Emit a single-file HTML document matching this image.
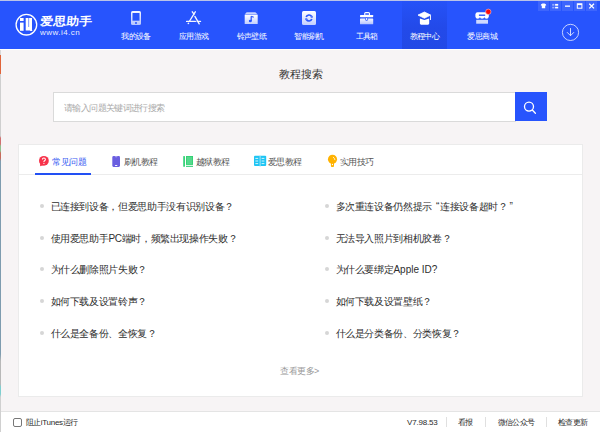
<!DOCTYPE html>
<html><head><meta charset="utf-8">
<style>
*{margin:0;padding:0;box-sizing:border-box}
html,body{width:600px;height:432px;overflow:hidden;background:#f7f4f5;font-family:"Liberation Sans",sans-serif;position:relative}
.abs{position:absolute}
#hdr{left:0;top:0;width:600px;height:48px;background:#2754fd;border-top:1px solid #bac3e8;border-bottom:1px solid #fff;height:50px}
.nav{position:absolute;top:0;height:47px;width:46px;color:#fff;font-size:8px;letter-spacing:-0.6px;font-weight:500;text-align:center}
.nav .lbl{position:absolute;left:-10px;right:-10px;top:32px;line-height:9px;white-space:nowrap}
.nav svg{position:absolute;left:8px;top:9px}
#sel{left:402px;top:1px;width:45px;height:48px;background:linear-gradient(#2552f8,#234ae9 55%,#2249e6)}
.wb{position:absolute;top:1px;width:11px;height:10px;background:rgba(255,255,255,0.10)}
#title{left:0;width:600px;padding-left:2px;top:66px;text-align:center;font-size:11px;letter-spacing:0.2px;color:#333;line-height:16px}
#search{left:53px;top:92px;width:463px;height:30px;background:#fff;border:1px solid #dadada;border-right:none}
#ph{left:64px;top:101.5px;font-size:9px;letter-spacing:-0.62px;color:#a9a9a9;line-height:12px;white-space:nowrap}
#sbtn{left:515px;top:92px;width:32px;height:29px;background:#2754fd}
#card{left:18px;top:144px;width:565px;height:253px;background:#fff;border:1px solid #ebebeb}
#tabsep{left:19px;top:174px;width:563px;height:1px;background:#ececec}
#uline{left:35px;top:173px;width:56px;height:2px;background:#2250f4}
.tab{position:absolute;top:156px;font-size:9px;letter-spacing:-0.5px;color:#555;line-height:12px;white-space:nowrap}
.item{position:absolute;font-size:10px;letter-spacing:-0.35px;color:#2e2e2e;line-height:12px;white-space:nowrap}
.dot{position:absolute;width:4px;height:4px;border-radius:50%;background:#d6d6d6}
#more{left:280px;top:364.5px;font-size:9px;letter-spacing:-0.5px;color:#999;line-height:12px}
#foot{left:0;top:411px;width:600px;height:21px;background:#fff;border-top:1px solid #e4e4e4}
.ft{position:absolute;top:417px;font-size:8px;letter-spacing:-0.6px;color:#2a2a2a;font-weight:500;line-height:12px;white-space:nowrap}
.fsep{position:absolute;top:417px;width:1px;height:10px;background:#e0e0e0}
</style></head><body>
<div id="hdr" class="abs"></div>
<div id="sel" class="abs"></div>
<svg class="abs" style="left:0;top:0" width="600" height="48" viewBox="0 0 600 48">
 <defs>
  <linearGradient id="gw" x1="0" y1="0" x2="0" y2="1">
   <stop offset="0" stop-color="#fff" stop-opacity="1"/><stop offset="1" stop-color="#fff" stop-opacity="0.72"/>
  </linearGradient>
  <linearGradient id="gb" x1="0" y1="0" x2="0" y2="1">
   <stop offset="0" stop-color="#fff" stop-opacity="0.95"/><stop offset="1" stop-color="#fff" stop-opacity="0.65"/>
  </linearGradient>
 </defs>
 <!-- logo -->
 <circle cx="26.4" cy="24.7" r="10.3" fill="none" stroke="#fff" stroke-width="1.3"/>
 <rect x="20" y="18" width="3.6" height="3" fill="#fff"/>
 <rect x="20" y="22.6" width="3.6" height="8.2" fill="#fff"/>
 <path d="M25.7 18h2.8v9h0.6v-9h2.9v12.2l0.6 0.9h-2.3l-0.4-0.7h-4.2z" fill="#fff"/>
 <!-- phone -->
 <rect x="131" y="11" width="10" height="14" rx="1.6" fill="url(#gb)"/>
 <rect x="132.5" y="13" width="7" height="7.7" fill="#2754fd"/>
 <circle cx="136" cy="23" r="1" fill="#2754fd"/>
 <!-- app store -->
 <g stroke="#fff" stroke-width="1.35" stroke-linecap="round" fill="none" opacity="0.95">
  <path d="M192.3 11.8L194 14.2"/>
  <path d="M195.3 11.8L189.6 21"/>
  <path d="M194.9 16.4L199.2 23.8"/>
  <path d="M186.6 21.4H195.4"/>
  <path d="M197.2 21.4H200.5"/>
  <path d="M188.2 23.6L188.6 23.2"/>
 </g>
 <!-- ringtone -->
 <path d="M246.6 12.2H255.4L257.7 14.5H244.7Z" fill="#fff" fill-opacity="0.75"/>
 <rect x="244.7" y="14.8" width="13" height="9.2" fill="url(#gw)"/>
 <path d="M251.2 16.3v4.6" stroke="#2754fd" stroke-width="1.2"/>
 <path d="M251.2 16.3l2.5 1" stroke="#2754fd" stroke-width="1.1"/>
 <ellipse cx="250.3" cy="21" rx="1.5" ry="1.3" fill="#2754fd"/>
 <!-- flash -->
 <rect x="302" y="11" width="14" height="14" rx="1.5" fill="url(#gw)"/>
 <path d="M306.18 16.97A3 3 0 0 1 311.60 16.50" stroke="#2754fd" stroke-width="1.7" fill="none"/>
 <path d="M311.82 19.03A3 3 0 0 1 306.40 19.50" stroke="#2754fd" stroke-width="1.7" fill="none"/>
 <path d="M312.81 15.80L312.45 17.97L310.39 17.20Z" fill="#2754fd"/>
 <path d="M305.19 20.20L305.55 18.03L307.61 18.80Z" fill="#2754fd"/>
 <!-- toolbox -->
 <rect x="364.7" y="12.6" width="4.8" height="2.8" rx="1" fill="none" stroke="#fff" stroke-width="1.1"/>
 <rect x="360" y="15" width="13.2" height="2.2" rx="0.6" fill="#fff"/>
 <rect x="360" y="18.5" width="13.2" height="5.8" rx="0.6" fill="url(#gb)"/>
 <rect x="365.6" y="17.6" width="2" height="2.8" rx="0.5" fill="#fff" stroke="#2754fd" stroke-width="0.8"/>
 <!-- grad cap -->
 <path d="M418 15.1L424.4 12L430.7 15.1L424.4 18.2Z" fill="#fff" stroke="#fff" stroke-width="0.8" stroke-linejoin="round"/>
 <path d="M419.9 18.4L424.4 19.9L429.2 18.4V23.6Q429.2 24.7 428 24.7H421.1Q419.9 24.7 419.9 23.6Z" fill="#fff"/>
 <path d="M430.5 15.3V20" stroke="#fff" stroke-width="0.9"/>
 <!-- shop -->
 <rect x="475.5" y="12.2" width="13.2" height="5" rx="2" fill="#fff"/>
 <circle cx="477.7" cy="16.5" r="2.2" fill="#fff"/><circle cx="482.1" cy="16.5" r="2.2" fill="#fff"/><circle cx="486.5" cy="16.5" r="2.2" fill="#fff"/>
 <rect x="478.9" y="14.5" width="6.3" height="1.4" fill="#2754fd"/>
 <rect x="476.2" y="19.8" width="11.8" height="3.9" fill="#fff" fill-opacity="0.78"/>
 <circle cx="488.3" cy="11.8" r="2.7" fill="#ff0a0a" stroke="#ffc8c8" stroke-width="0.6"/>
 <!-- window buttons -->
 <rect x="538" y="1" width="11" height="10" fill="#fff" fill-opacity="0.1"/>
 <rect x="550" y="1" width="11" height="10" fill="#fff" fill-opacity="0.1"/>
 <rect x="562" y="1" width="11" height="10" fill="#fff" fill-opacity="0.1"/>
 <rect x="574" y="1" width="11" height="10" fill="#fff" fill-opacity="0.1"/>
 <rect x="586" y="1" width="11" height="10" fill="#fff" fill-opacity="0.1"/>
 <path d="M541.2 4.2L542.5 3.6H544.5L545.8 4.2L546.3 5.3L545.2 5.8V8.2H541.8V5.8L540.7 5.3Z" fill="#fff"/>
 <rect x="552.2" y="3.9" width="2.2" height="1.8" fill="#fff" fill-opacity="0.45"/>
 <rect x="552.2" y="6.8" width="2.2" height="1.6" fill="#fff" fill-opacity="0.45"/>
 <rect x="555.1" y="3.9" width="3.1" height="1.8" fill="#fff"/>
 <rect x="555.1" y="6.8" width="3.1" height="1.6" fill="#fff"/>
 <rect x="565" y="5.5" width="5" height="1.3" fill="#fff"/>
 <rect x="577.3" y="3.8" width="4.6" height="4.4" fill="none" stroke="#fff" stroke-width="1"/>
 <rect x="577.3" y="3.8" width="4.6" height="1.3" fill="#fff"/>
 <path d="M589.3 3.8L594 8.4M594 3.8L589.3 8.4" stroke="#fff" stroke-width="1.3"/>
 <!-- download -->
 <circle cx="570.5" cy="32.4" r="8.1" fill="none" stroke="#fff" stroke-opacity="0.72" stroke-width="1"/>
 <path d="M570.5 28.1V35.6M567 32.2L570.5 35.7L574 32.2" fill="none" stroke="#fff" stroke-opacity="0.78" stroke-width="1"/>
</svg>
<div class="abs" style="left:39.5px;top:13.5px;color:#fff;font-size:11px;font-weight:bold;letter-spacing:0.2px;line-height:14px;white-space:nowrap;transform:scale(1.16,1.02) skewX(-5deg);transform-origin:0 50%">爱思助手</div>
<div class="abs" style="left:40px;top:27px;color:rgba(255,255,255,0.92);font-size:8px;letter-spacing:0.45px;line-height:12px;white-space:nowrap">www.i4.cn</div>
<div class="nav" style="left:113px"><div class="lbl">我的设备</div></div>
<div class="nav" style="left:170.7px"><div class="lbl">应用游戏</div></div>
<div class="nav" style="left:228.4px"><div class="lbl">铃声壁纸</div></div>
<div class="nav" style="left:286.1px"><div class="lbl">智能刷机</div></div>
<div class="nav" style="left:343.8px"><div class="lbl">工具箱</div></div>
<div class="nav" style="left:401.5px"><div class="lbl">教程中心</div></div>
<div class="nav" style="left:459.2px"><div class="lbl">爱思商城</div></div>

<div id="title" class="abs">教程搜索</div>
<div id="search" class="abs"></div>
<div id="ph" class="abs">请输入问题关键词进行搜索</div>
<div id="sbtn" class="abs"></div>
<svg class="abs" style="left:515px;top:92px" width="32" height="30" viewBox="0 0 32 30">
 <circle cx="14" cy="14.6" r="4.5" fill="none" stroke="#fff" stroke-width="1.3"/>
 <path d="M17.3 18L20.4 21.2" stroke="#fff" stroke-width="1.3" stroke-linecap="round"/>
</svg>

<div id="card" class="abs"></div>
<div id="tabsep" class="abs"></div>
<div id="uline" class="abs"></div>
<svg class="abs" style="left:0;top:150px" width="600" height="22" viewBox="0 150 600 22">
 <circle cx="43.9" cy="160.8" r="4.9" fill="#f7334b"/>
 <path d="M40.2 162.8L40.1 166.2L43.2 165.2Z" fill="#f7334b"/>
 <path d="M42.4 159.5Q42.4 158 43.9 158Q45.4 158 45.4 159.4Q45.4 160.3 44.5 160.8Q43.9 161.2 43.9 162" fill="none" stroke="#fff" stroke-width="1.05"/>
 <circle cx="43.9" cy="163.3" r="0.65" fill="#fff"/>
 <rect x="112.3" y="156.1" width="7.7" height="10.8" rx="1.3" fill="#6a5ee0"/>
 <path d="M114.6 156.1H117.7Q117.5 157.4 116.15 157.4Q114.8 157.4 114.6 156.1Z" fill="#a59cf0"/>
 <rect x="114.9" y="164.9" width="2.5" height="1" rx="0.4" fill="#f4f2ff"/>
 <rect x="183.2" y="156" width="1.8" height="10.8" rx="0.6" fill="#38d27a"/>
 <rect x="186" y="156" width="7" height="8.9" fill="#30cf70"/>
 <rect x="186.8" y="156.8" width="5.4" height="7.3" fill="#55d98c"/>
 <rect x="186" y="165.8" width="7" height="1.1" fill="#38d27a"/>
 <rect x="254" y="155.8" width="12.2" height="10.3" rx="1" fill="#1ec5f4"/>
 <rect x="259.5" y="155.8" width="1.3" height="10.6" fill="#86ddf8"/>
 <path d="M255.4 158.4h2.8M255.4 161h2.8M255.4 163.6h2.8M261.6 158.4h2.8M261.6 161h2.8M261.6 163.6h2.8" stroke="#fff" stroke-width="0.8"/>
 <circle cx="332.5" cy="159.2" r="4.55" fill="#ffb200"/>
 <rect x="330.9" y="162" width="3.1" height="4.9" rx="0.9" fill="#ffb200"/>
 <circle cx="332.45" cy="164.5" r="0.65" fill="#fff"/>
 <path d="M333.3 157.2Q334.6 157.9 334.9 159.7" fill="none" stroke="#fff" stroke-width="0.75" stroke-linecap="round"/>
</svg>
<div class="tab" style="left:52px;color:#3a5cf2">常见问题</div>
<div class="tab" style="left:123.5px">刷机教程</div>
<div class="tab" style="left:195.5px">越狱教程</div>
<div class="tab" style="left:267.5px">爱思教程</div>
<div class="tab" style="left:339.5px">实用技巧</div>

<div class="dot" style="left:40px;top:204px"></div><div class="item" style="left:50.5px;top:201px">已连接到设备，但爱思助手没有识别设备？</div>
<div class="dot" style="left:40px;top:236px"></div><div class="item" style="left:50.5px;top:233px">使用爱思助手PC端时，频繁出现操作失败？</div>
<div class="dot" style="left:40px;top:267px"></div><div class="item" style="left:50.5px;top:264px">为什么删除照片失败？</div>
<div class="dot" style="left:40px;top:299px"></div><div class="item" style="left:50.5px;top:296px">如何下载及设置铃声？</div>
<div class="dot" style="left:40px;top:331px"></div><div class="item" style="left:50.5px;top:328px">什么是全备份、全恢复？</div>

<div class="dot" style="left:325px;top:204px"></div><div class="item" style="left:335.5px;top:201px">多次重连设备仍然提示<span style="margin-left:4px;margin-right:1px">“</span>连接设备超时？<span style="margin-left:2px">”</span></div>
<div class="dot" style="left:325px;top:236px"></div><div class="item" style="left:335.5px;top:233px">无法导入照片到相机胶卷？</div>
<div class="dot" style="left:325px;top:267px"></div><div class="item" style="left:335.5px;top:264px">为什么要绑定<span style="letter-spacing:0">Apple ID?</span></div>
<div class="dot" style="left:325px;top:299px"></div><div class="item" style="left:335.5px;top:296px">如何下载及设置壁纸？</div>
<div class="dot" style="left:325px;top:331px"></div><div class="item" style="left:335.5px;top:328px">什么是分类备份、分类恢复？</div>

<div id="more" class="abs">查看更多&gt;</div>

<div id="foot" class="abs"></div>
<div class="abs" style="left:0;top:50px;width:1px;height:382px;background:linear-gradient(#d8d8d8 0,#d8d8d8 5px,#e0643a 5px,#e0643a 24px,#cfcfcf 24px,#cfcfcf 86px,#d07070 88px,#d07070 94px,#90c090 96px,#90c090 101px,#c86a5a 103px,#c86a5a 108px,#7e9caf 111px,#7e9caf 304px,#b8b8b8 311px,#b8b8b8 334px,#7ecfd0 337px,#7ecfd0 344px,#d0d0d0 347px)"></div>
<div class="abs" style="left:13px;top:418px;width:9px;height:9px;border:1px solid #777;border-radius:2px;background:#fff"></div>
<div class="ft" style="left:26px">阻止<span style="letter-spacing:-0.3px">iTunes</span>运行</div>
<div class="ft" style="left:407px;letter-spacing:-0.2px;top:416.5px">V7.98.53</div>
<div class="fsep" style="left:446px"></div>
<div class="ft" style="left:458px">看报</div>
<div class="fsep" style="left:485px"></div>
<div class="ft" style="left:497.5px">微信公众号</div>
<div class="fsep" style="left:546px"></div>
<div class="ft" style="left:558px">检查更新</div>
</body></html>
